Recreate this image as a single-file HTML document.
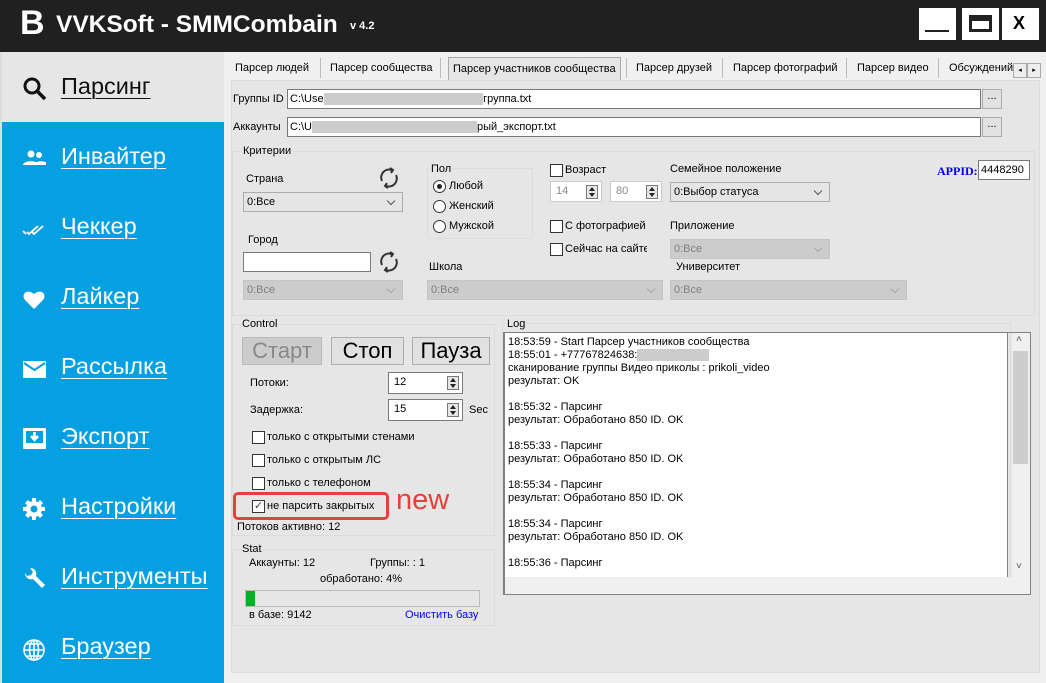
<!DOCTYPE html>
<html><head><meta charset="utf-8"><style>
*{box-sizing:border-box;margin:0;padding:0}
body{width:1046px;height:683px;overflow:hidden;background:#f0f0f0;font-family:"Liberation Sans",sans-serif;font-size:11px;color:#000;position:relative}
.a{position:absolute;white-space:nowrap}
.title{left:0;top:0;width:1046px;height:52px;background:#202020}
.wb{top:8px;width:37px;height:32px;background:#fff}
.side{left:0;top:52px;width:224px;height:631px;background:#05a0e1}
.sidetop{left:0;top:52px;width:224px;height:70px;background:#e6e6e6}
.nav{left:61px;color:#fff;font-size:23.5px;text-decoration:underline;text-underline-offset:4px;text-decoration-thickness:1px}
.ico{left:22px;width:24px;height:24px}
.inp{background:#fff;border:1px solid #7a7a7a}
.sel{background:#e5e5e5;border:1px solid #adadad;padding:3px 3px;font-size:11px}
.dis{background:#ccc;border:1px solid #c4c4c4;color:#808080}
.sel:after{content:"";position:absolute;right:8px;top:5px;width:5px;height:5px;border-right:1px solid #555;border-bottom:1px solid #555;transform:rotate(45deg)}
.dis:after{border-color:#aaa}
.grp{border:1px solid #dcdcdc}
.cb{width:13px;height:13px;border:1px solid #333;background:#fff}
.rb{width:13px;height:13px;border:1px solid #333;border-radius:50%;background:#fff}
.btn{background:#e1e1e1;border:1px solid #adadad;font-size:22px;text-align:center;line-height:26px}
.spin{background:#fff;border:1px solid #7a7a7a;padding:3px 5px}
.spin i{position:absolute;right:3px;top:3px;width:12px;height:14px;border:1px solid #777;background:#e6e6e6}
.spin i:before{content:"";position:absolute;left:2px;top:1px;border:3px solid transparent;border-bottom:4px solid #222;border-top:0}
.spin i:after{content:"";position:absolute;left:2px;top:7px;border:3px solid transparent;border-top:4px solid #222;border-bottom:0}
.lg{left:508px;line-height:13px}
</style></head><body>
<div class="a title"></div>
<div class="a" style="left:20px;top:4px;color:#fff;font-size:34px;font-weight:bold">B</div>
<div class="a" style="left:56px;top:11px;color:#fff;font-size:24.5px;font-weight:bold">VVKSoft - SMMCombain</div>
<div class="a" style="left:350px;top:20px;color:#fff;font-size:11px;font-weight:bold">v 4.2</div>
<div class="a wb" style="left:919px"><div class="a" style="left:6px;top:22px;width:24px;height:2px;background:#222"></div></div>
<div class="a wb" style="left:962px"><div class="a" style="left:7px;top:7px;width:23px;height:17px;border:3px solid #222;border-top-width:6px"></div></div>
<div class="a wb" style="left:1002px"><div class="a" style="left:11px;top:5px;font-size:18px;font-weight:bold">X</div></div>

<div class="a side"></div>
<div class="a sidetop"></div>
<div class="a" style="left:0;top:52px;width:2px;height:631px;background:#ddd"></div>
<svg class="a" style="left:22px;top:76px" width="26" height="26" viewBox="0 0 26 26"><circle cx="10" cy="10" r="7" fill="none" stroke="#111" stroke-width="3"/><path d="M15 15l8 8" stroke="#111" stroke-width="3.5"/></svg>
<div class="a nav" style="top:73px;color:#111">Парсинг</div>
<svg class="a ico" style="top:146px" viewBox="0 0 24 24" fill="#fff"><circle cx="9" cy="8" r="3.5"/><circle cx="17" cy="9" r="3"/><path d="M1 19c0-5 16-5 16 0zM14 19c0-3 2-5 10-3v3z"/></svg>
<div class="a nav" style="top:143px">Инвайтер</div>
<svg class="a ico" style="top:217px" viewBox="0 0 24 24" fill="none" stroke="#fff" stroke-width="1.8"><path d="M1 14l3 3M5 15l2 2 9-8M10 15l2 2 9-8"/></svg>
<div class="a nav" style="top:213px">Чеккер</div>
<svg class="a ico" style="top:287px" viewBox="0 0 24 24" fill="#fff"><path d="M12 22L3 13C-1 8 4 1 12 7c8-6 13 1 9 6z"/></svg>
<div class="a nav" style="top:283px">Лайкер</div>
<svg class="a ico" style="top:357px" viewBox="0 0 24 24"><rect x="1" y="4" width="23" height="17" rx="1" fill="#fff"/><path d="M2 6l10.5 7L23 6" fill="none" stroke="#05a0e1" stroke-width="2"/></svg>
<div class="a nav" style="top:353px">Рассылка</div>
<svg class="a ico" style="top:426px" viewBox="0 0 24 24"><rect x="1" y="2" width="23" height="21" rx="1" fill="#fff"/><rect x="4" y="5" width="17" height="12" fill="#05a0e1"/><path d="M12.5 6v6M9 10l3.5 4 3.5-4" stroke="#fff" stroke-width="2.5" fill="none"/></svg>
<div class="a nav" style="top:423px">Экспорт</div>
<svg class="a ico" style="top:497px" viewBox="0 0 24 24" fill="#fff"><circle cx="12" cy="12" r="8"/><path d="M10 1h4v5h-4zM10 18h4v5h-4zM1 10h5v4H1zM18 10h5v4h-5zM3 6l3-3 4 4-3 3zM14 17l3-3 4 4-3 3zM3 18l4-4 3 3-4 4zM14 7l4-4 3 3-4 4z"/><circle cx="12" cy="12" r="3.5" fill="#05a0e1"/></svg>
<div class="a nav" style="top:493px">Настройки</div>
<svg class="a ico" style="top:567px" viewBox="0 0 24 24" fill="#fff"><path d="M3 6a6 6 0 008 6l9 9 3-3-9-9A6 6 0 008 1L11 5 9 8 5 9z"/></svg>
<div class="a nav" style="top:563px">Инструменты</div>
<svg class="a ico" style="top:638px" viewBox="0 0 24 24" fill="none" stroke="#fff" stroke-width="1.6"><circle cx="12" cy="12" r="10"/><ellipse cx="12" cy="12" rx="4.5" ry="10"/><path d="M2 12h20M4 6h16M4 18h16M12 2v20"/></svg>
<div class="a nav" style="top:633px">Браузер</div>

<div class="a" style="left:231px;top:80px;width:809px;height:593px;background:#e6e6e6;border:1px solid #dcdcdc"></div>
<div class="a" style="left:235px;top:62px">Парсер людей</div>
<div class="a" style="left:320px;top:58px;width:1px;height:20px;background:#bbb"></div>
<div class="a" style="left:330px;top:62px">Парсер сообщества</div>
<div class="a" style="left:440px;top:58px;width:1px;height:20px;background:#bbb"></div>
<div class="a" style="left:448px;top:57px;width:173px;height:23px;border:1px solid #aaa;border-bottom:none;background:#e6e6e6"></div>
<div class="a" style="left:453px;top:63px">Парсер участников сообщества</div>
<div class="a" style="left:626px;top:58px;width:1px;height:20px;background:#bbb"></div>
<div class="a" style="left:636px;top:62px">Парсер друзей</div>
<div class="a" style="left:722px;top:58px;width:1px;height:20px;background:#bbb"></div>
<div class="a" style="left:733px;top:62px">Парсер фотографий</div>
<div class="a" style="left:846px;top:58px;width:1px;height:20px;background:#bbb"></div>
<div class="a" style="left:857px;top:62px">Парсер видео</div>
<div class="a" style="left:938px;top:58px;width:1px;height:20px;background:#bbb"></div>
<div class="a" style="left:949px;top:62px;width:64px;overflow:hidden">Обсуждений</div>
<div class="a" style="left:1013px;top:63px;width:14px;height:15px;border:1px solid #aaa;background:#eee;font-size:7px;text-align:center;line-height:13px">◂</div>
<div class="a" style="left:1027px;top:63px;width:14px;height:15px;border:1px solid #aaa;background:#eee;font-size:7px;text-align:center;line-height:13px">▸</div>

<div class="a" style="left:233px;top:93px">Группы ID</div>
<div class="a inp" style="left:287px;top:89px;width:694px;height:20px;padding:3px 2px">C:\Use<span style="background:#ccc;color:#ccc">xxxxxxxxxxxxxxxxxxxxxxxxxxxxx</span>группа.txt</div>
<div class="a" style="left:982px;top:89px;width:20px;height:20px;border:1px solid #adadad;background:#e1e1e1;text-align:center">...</div>
<div class="a" style="left:233px;top:121px">Аккаунты</div>
<div class="a inp" style="left:287px;top:117px;width:694px;height:20px;padding:3px 2px">C:\U<span style="background:#ccc;color:#ccc">xxxxxxxxxxxxxxxxxxxxxxxxxxxxxx</span>рый_экспорт.txt</div>
<div class="a" style="left:982px;top:117px;width:20px;height:20px;border:1px solid #adadad;background:#e1e1e1;text-align:center">...</div>

<div class="a grp" style="left:232px;top:151px;width:803px;height:165px"></div>
<div class="a" style="left:241px;top:145px;background:#e6e6e6;padding:0 2px">Критерии</div>
<div class="a" style="left:246px;top:173px">Страна</div>
<svg class="a" style="left:378px;top:167px" width="22" height="22" viewBox="0 0 22 22" fill="none" stroke="#333" stroke-width="2"><path d="M4 14A8 8 0 0114 3M18 8a8 8 0 01-10 11"/><path d="M12 1l3 2-2 3M10 21l-3-2 2-3" fill="#333"/></svg>
<div class="a sel" style="left:243px;top:192px;width:160px;height:20px">0:Все</div>
<div class="a grp" style="left:427px;top:168px;width:106px;height:71px"></div>
<div class="a" style="left:431px;top:163px;background:#e6e6e6">Пол</div>
<div class="a rb" style="left:433px;top:180px"><div class="a" style="left:3px;top:3px;width:5px;height:5px;border-radius:50%;background:#222"></div></div>
<div class="a" style="left:449px;top:180px">Любой</div>
<div class="a rb" style="left:433px;top:200px"></div><div class="a" style="left:449px;top:200px">Женский</div>
<div class="a rb" style="left:433px;top:220px"></div><div class="a" style="left:449px;top:220px">Мужской</div>
<div class="a" style="left:248px;top:234px">Город</div>
<div class="a inp" style="left:243px;top:252px;width:128px;height:20px"></div>
<svg class="a" style="left:378px;top:251px" width="22" height="22" viewBox="0 0 22 22" fill="none" stroke="#333" stroke-width="2"><path d="M4 14A8 8 0 0114 3M18 8a8 8 0 01-10 11"/><path d="M12 1l3 2-2 3M10 21l-3-2 2-3" fill="#333"/></svg>
<div class="a sel dis" style="left:243px;top:280px;width:160px;height:20px">0:Все</div>
<div class="a" style="left:429px;top:261px">Школа</div>
<div class="a sel dis" style="left:427px;top:280px;width:236px;height:20px">0:Все</div>
<div class="a cb" style="left:550px;top:164px"></div><div class="a" style="left:565px;top:164px">Возраст</div>
<div class="a spin" style="left:550px;top:181px;width:52px;height:21px;color:#888;border-color:#ccc">14<i></i></div>
<div class="a spin" style="left:610px;top:181px;width:52px;height:21px;color:#888;border-color:#ccc">80<i></i></div>
<div class="a cb" style="left:550px;top:220px"></div><div class="a" style="left:565px;top:220px">С фотографией</div>
<div class="a cb" style="left:550px;top:243px"></div><div class="a" style="left:565px;top:243px;width:82px;overflow:hidden">Сейчас на сайте</div>
<div class="a" style="left:670px;top:163px">Семейное положение</div>
<div class="a sel" style="left:670px;top:182px;width:160px;height:20px">0:Выбор статуса</div>
<div class="a" style="left:670px;top:220px">Приложение</div>
<div class="a sel dis" style="left:670px;top:239px;width:160px;height:20px">0:Все</div>
<div class="a" style="left:676px;top:261px">Университет</div>
<div class="a sel dis" style="left:670px;top:280px;width:237px;height:20px">0:Все</div>
<div class="a" style="left:937px;top:164px;color:#00f;font-weight:bold;font-family:'Liberation Serif',serif;font-size:12px">APPID:</div>
<div class="a inp" style="left:978px;top:160px;width:52px;height:20px;padding:3px 2px">4448290</div>

<div class="a grp" style="left:232px;top:324px;width:263px;height:212px"></div>
<div class="a" style="left:242px;top:318px;background:#e6e6e6">Control</div>
<div class="a btn" style="left:242px;top:337px;width:80px;height:28px;background:#ccc;color:#888;border-color:#bbb">Старт</div>
<div class="a btn" style="left:331px;top:337px;width:73px;height:28px">Стоп</div>
<div class="a btn" style="left:412px;top:337px;width:78px;height:28px">Пауза</div>
<div class="a" style="left:250px;top:377px">Потоки:</div>
<div class="a spin" style="left:388px;top:372px;width:75px;height:22px">12<i></i></div>
<div class="a" style="left:250px;top:404px">Задержка:</div>
<div class="a spin" style="left:388px;top:399px;width:75px;height:22px">15<i></i></div>
<div class="a" style="left:469px;top:404px">Sec</div>
<div class="a cb" style="left:252px;top:431px"></div><div class="a" style="left:267px;top:431px">только с открытыми стенами</div>
<div class="a cb" style="left:252px;top:454px"></div><div class="a" style="left:267px;top:454px">только с открытым ЛС</div>
<div class="a cb" style="left:252px;top:477px"></div><div class="a" style="left:267px;top:477px">только с телефоном</div>
<div class="a cb" style="left:252px;top:500px;font-size:11px;line-height:10px;text-align:center;color:#444">✓</div><div class="a" style="left:267px;top:500px">не парсить закрытых</div>
<div class="a" style="left:233px;top:492px;width:156px;height:28px;border:3px solid #e5413a;border-radius:5px"></div>
<div class="a" style="left:396px;top:484px;color:#e5413a;font-size:29px">new</div>
<div class="a" style="left:237px;top:521px">Потоков активно: 12</div>

<div class="a grp" style="left:232px;top:549px;width:263px;height:77px"></div>
<div class="a" style="left:242px;top:543px;background:#e6e6e6">Stat</div>
<div class="a" style="left:249px;top:557px">Аккаунты: 12</div>
<div class="a" style="left:370px;top:557px">Группы: : 1</div>
<div class="a" style="left:320px;top:573px">обработано: 4%</div>
<div class="a" style="left:245px;top:590px;width:235px;height:17px;border:1px solid #bcbcbc;background:#e6e6e6"><div style="width:9px;height:15px;background:#06b025"></div></div>
<div class="a" style="left:249px;top:609px">в базе: 9142</div>
<div class="a" style="left:405px;top:609px;color:#00f">Очистить базу</div>

<div class="a grp" style="left:502px;top:323px;width:509px;height:272px"></div>
<div class="a" style="left:507px;top:318px;background:#e6e6e6">Log</div>
<div class="a" style="left:503px;top:332px;width:505px;height:263px;background:#fff;border:1px solid #828282"></div>
<div class="a" style="left:1012px;top:333px;width:18px;height:244px;background:#f0f0f0"><div style="margin-top:18px;height:113px;background:#cdcdcd;margin-left:1px;width:15px"></div></div>
<div class="a" style="left:1016px;top:334px;font-size:10px;color:#555">˄</div>
<div class="a" style="left:1016px;top:561px;font-size:10px;color:#555">˅</div>
<div class="a" style="left:504px;top:577px;width:526px;height:17px;background:#f0f0f0"></div>
<div class="a" style="left:504px;top:332px;width:527px;height:263px;border:1px solid #828282"></div>
<div class="a lg" style="top:336px">18:53:59 - Start Парсер участников сообщества<br>18:55:01 - +77767824638:<span style="background:#ccc;color:#ccc">xxxxxxxxxxxxx</span><br>сканирование группы Видео приколы : prikoli_video<br>результат: OK<br><br>18:55:32 - Парсинг<br>результат: Обработано 850 ID. OK<br><br>18:55:33 - Парсинг<br>результат: Обработано 850 ID. OK<br><br>18:55:34 - Парсинг<br>результат: Обработано 850 ID. OK<br><br>18:55:34 - Парсинг<br>результат: Обработано 850 ID. OK<br><br>18:55:36 - Парсинг</div>
</body></html>
